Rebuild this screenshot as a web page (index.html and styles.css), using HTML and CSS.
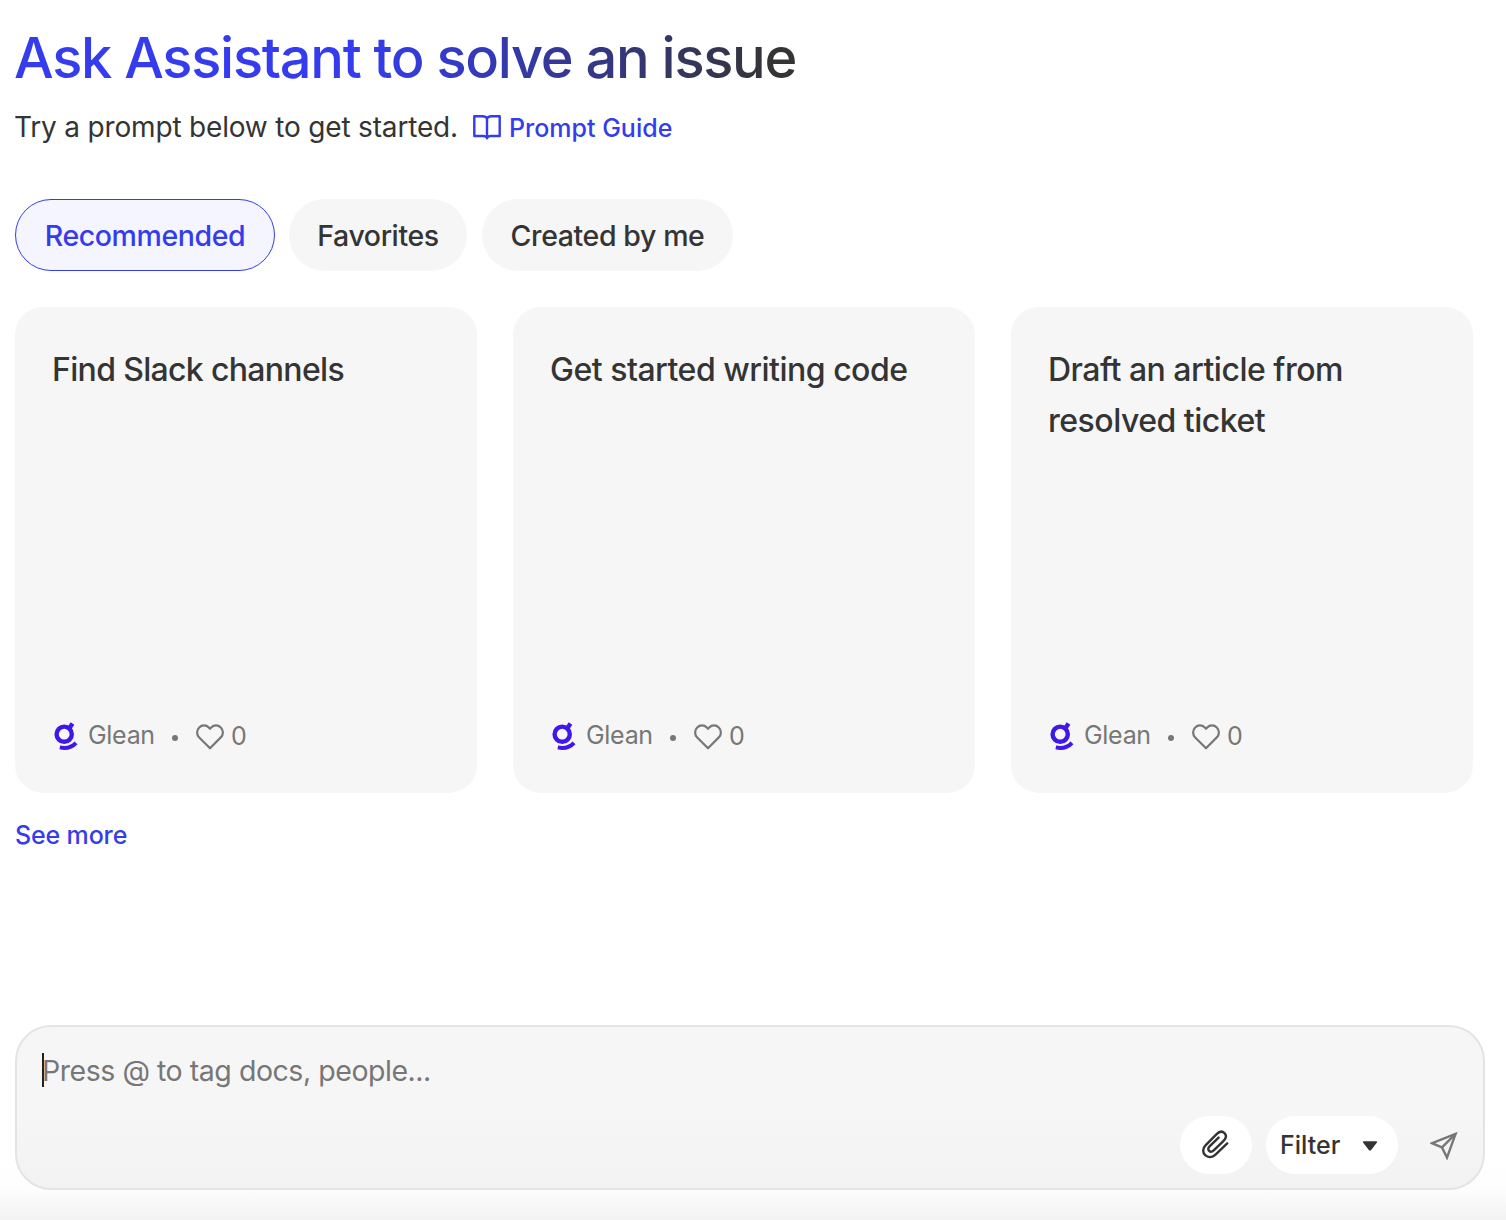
FILE: index.html
```html
<!DOCTYPE html>
<html lang="en">
<head>
<meta charset="utf-8">
<title>Assistant</title>
<link rel="stylesheet" href="styles.css">
</head>
<body>
<svg class="sprite" aria-hidden="true">
  <symbol id="glean" viewBox="0 0 24 28">
    <g fill="none" stroke="#3f17ea" stroke-width="4.4">
      <circle cx="10.2" cy="12.2" r="7.6"/>
      <path d="M15.2 6.4 18.5 1.6"/>
      <path d="M5.8 25.4C12.2 26.7 18.2 25 22 20.8" stroke-width="4"/>
    </g>
  </symbol>
  <symbol id="heart" viewBox="0 0 28 26">
    <path d="M14 24.3 3.2 13.4A6.9 6.9 0 0 1 3.2 3.5 6.7 6.7 0 0 1 12.8 3.5L14 4.8 15.2 3.5A6.7 6.7 0 0 1 24.8 3.5 6.9 6.9 0 0 1 24.8 13.4Z" fill="none" stroke="currentColor" stroke-width="2.2" stroke-linejoin="round"/>
  </symbol>
</svg>
<main class="page">
  <h1 class="title">Ask Assistant to solve an issue</h1>
  <div class="intro">
    <span class="intro-text">Try a prompt below to get started.</span>
    <a class="guide">
      <svg class="book" viewBox="0 0 28 26" fill="none" stroke="currentColor" stroke-width="2.4" stroke-linejoin="round" stroke-linecap="round"><path d="M14 4.4C13 2.5 11.5 2.2 9.5 2.2H1.3V22H10C12 22 13.4 22.5 14 24.2 14.6 22.5 16 22 18 22H26.7V2.2H18.5C16.5 2.2 15 2.5 14 4.4ZM14 4.4V24.2"/></svg>
      <span class="guide-text">Prompt Guide</span>
    </a>
  </div>
  <nav class="tabs">
    <button class="tab tab-active"><span>Recommended</span></button>
    <button class="tab tab-fav"><span>Favorites</span></button>
    <button class="tab tab-mine"><span>Created by me</span></button>
  </nav>
  <section class="cards">
    <article class="card">
      <h2 class="card-title card-title-tight">Find Slack channels</h2>
      <footer class="meta"><svg class="logo"><use href="#glean"/></svg><span class="author">Glean</span><i class="dot"></i><svg class="heart"><use href="#heart"/></svg><span class="count">0</span></footer>
    </article>
    <article class="card">
      <h2 class="card-title">Get started writing code</h2>
      <footer class="meta"><svg class="logo"><use href="#glean"/></svg><span class="author">Glean</span><i class="dot"></i><svg class="heart"><use href="#heart"/></svg><span class="count">0</span></footer>
    </article>
    <article class="card">
      <h2 class="card-title">Draft an article from resolved ticket</h2>
      <footer class="meta"><svg class="logo"><use href="#glean"/></svg><span class="author">Glean</span><i class="dot"></i><svg class="heart"><use href="#heart"/></svg><span class="count">0</span></footer>
    </article>
  </section>
  <a class="more">See more</a>
  <section class="composer">
    <div class="field"><span class="placeholder">Press @ to tag docs, people...</span><i class="caret"></i></div>
    <div class="actions">
      <button class="attach" aria-label="Attach"><svg class="clip" viewBox="0 0 28 30" fill="none" stroke="currentColor" stroke-width="2.4" stroke-linecap="round" stroke-linejoin="round"><path d="M26.2 14.4 14.5 25.6C11.3 28.6 7 28.8 4.2 26.2 1.4 23.4 1.6 19.3 4.7 16.2L15.6 5.1C18.2 2.5 21.3 2 23.5 4.1 25.6 6.3 25.2 9.2 22.6 11.8L13 21.2C11.3 22.8 9.4 23.2 8.1 21.9 6.8 20.6 7.1 18.8 8.8 17.1L17.6 8.6"/></svg></button>
      <button class="filter"><span>Filter</span><svg class="arrow" viewBox="0 0 16 10"><path d="M1.6 1H14.4L8.8 8.4Q8 9.2 7.2 8.4Z" fill="currentColor" stroke="currentColor" stroke-width="1.4" stroke-linejoin="round"/></svg></button>
      <button class="send" aria-label="Send"><svg width="28" height="28" viewBox="0 0 28 28" fill="none" stroke="currentColor" stroke-width="2.4" stroke-linejoin="miter"><path d="M25.6 1.8 2 11.2 12 15.4 17 25.6Z"/><path d="M25.6 1.8 12 15.4"/></svg></button>
    </div>
  </section>
</main>
</body>
</html>
```

FILE: styles.css
```css
* { box-sizing: border-box; }
html, body { margin: 0; height: 100%; }
body {
  font-family: Inter, "Liberation Sans", sans-serif;
  color: #343434;
  background: linear-gradient(to bottom, #fff 1160px, #fdfdfd 1190px, #f2f2f2 1220px) #fff;
  overflow: hidden;
}
button { border: 0; margin: 0; padding: 0; font: inherit; color: inherit; }
svg { display: block; flex: none; }
.sprite { display: none; }
.page { display: flex; flex-direction: column; align-items: flex-start; height: 1220px; padding: 23px 21px 30px 15px; }
.title {
  margin: 0 0 0 -1px;
  font-size: 56px; font-weight: 550; line-height: 70px; letter-spacing: -1.3px; word-spacing: -0.5px; white-space: nowrap;
  color: transparent;
  background: linear-gradient(to right, #343ced 45%, #343434 97%);
  -webkit-background-clip: text; background-clip: text;
}
.intro { display: flex; align-items: center; height: 40px; margin-top: 14px; white-space: nowrap; }
.intro-text { font-size: 28px; width: 459px; margin-left: -1px; letter-spacing: -0.18px; line-height: 40px; }
.guide { display: flex; align-items: center; color: #343ced; }
.book { width: 28px; height: 26px; margin-right: 8px; }
.guide-text { font-size: 25px; font-weight: 500; line-height: 40px; padding-top: 2px; }
.tabs { display: flex; gap: 15px; margin-top: 52px; height: 72px; }
.tab { display: flex; align-items: center; justify-content: center; height: 72px; border-radius: 36px; background: #f6f6f6; font-size: 28.5px; font-weight: 500; letter-spacing: -0.4px; white-space: nowrap; padding-top: 1px; }
.tab-active { width: 260px; border: 1px solid #343ced; background: #f4f5ff; color: #343ced; margin-right: -1px; padding-top: 0; }
.tab-fav { width: 178px; }
.tab-mine { width: 251px; }
.cards { display: grid; grid-template-columns: repeat(3, 462px); gap: 36px; margin-top: 36px; }
.card { display: flex; flex-direction: column; justify-content: space-between; height: 486px; padding: 37px 37px 37px; border-radius: 28px; background: #f6f6f6; }
.card-title { margin: 0; font-size: 32px; font-weight: 530; line-height: 51px; letter-spacing: -0.5px; }
.card-title-tight { letter-spacing: -0.67px; }
.meta { display: flex; align-items: center; height: 42px; color: #777; font-size: 25px; }
.logo { width: 24px; height: 28px; margin: 2px 10px 0 2px; }
.author { width: 85px; letter-spacing: -0.3px; }
.dot { width: 6px; height: 6px; margin: 5px 17px 0 -1px; border-radius: 50%; background: #777; }
.heart { width: 28px; height: 26px; margin: 3px 7px 0 1px; }
.count { padding-top: 2px; }
.more { margin-top: 22px; font-size: 25px; font-weight: 500; line-height: 40px; letter-spacing: -0.15px; color: #343ced; }
.composer { display: flex; flex-direction: column; justify-content: space-between; align-self: stretch; height: 165px; margin-top: auto; padding: 24px 14px 14px 25px; border: 2px solid #e4e4e4; border-radius: 36px; background: linear-gradient(to bottom, #f6f6f6 55%, #f2f2f2); }
.field { position: relative; }
.placeholder { font-size: 28.5px; line-height: 40px; letter-spacing: -0.46px; color: #777; white-space: nowrap; }
.caret { position: absolute; left: 0; top: 2px; width: 2px; height: 34px; background: #222; }
.actions { display: flex; justify-content: flex-end; align-items: center; }
.attach { display: grid; place-items: center; width: 72px; height: 58px; padding: 0 2px 2px 0; border-radius: 29px; background: #fff; margin-right: 14px; }
.clip { width: 28px; height: 30px; }
.filter { display: flex; align-items: center; justify-content: space-between; width: 132px; height: 58px; padding: 0 20px 0 14px; border-radius: 29px; background: #fff; font-size: 25px; font-weight: 500; }
.arrow { width: 16px; height: 10px; margin-top: 2px; }
.send { display: grid; place-items: center; width: 58px; height: 58px; margin-left: 17px; margin-right: -4px; padding-top: 1px; background: none; color: #777; }
```
